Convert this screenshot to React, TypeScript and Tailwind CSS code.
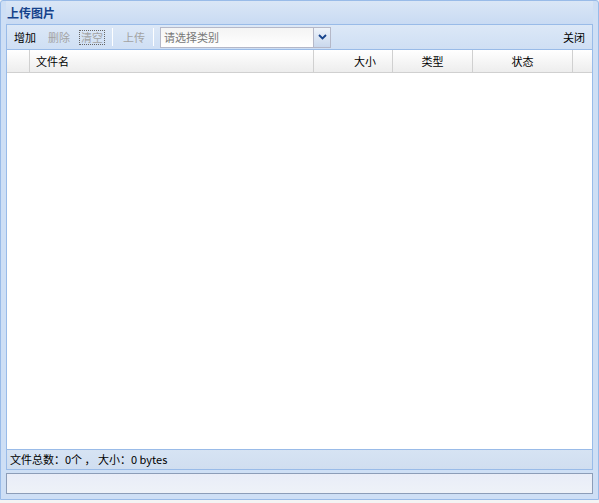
const font = { fontFamily: '"Noto Sans CJK SC", "DejaVu Sans", sans-serif' };

function Sep() {
  return <span className="h-[18px] w-px border-r border-[#fdfeff] bg-[#aac4e4]" />;
}

export default function App() {
  return (
    <div className="h-[503px] w-[599px] bg-[#f4f4f4] text-[11px] leading-none text-black" style={font}>
      <div className="flex h-[500px] flex-col rounded-t-[3px] border border-[#99bbe8] bg-[#cedff5] px-[5px] pb-[5px]">
        <div className="flex h-[23px] items-center bg-gradient-to-b from-[#dae6f6] to-[#c9dbf3] pl-[1px] text-[12px] font-bold text-[#15428b]">
          上传图片
        </div>
        <div className="flex flex-1 flex-col border border-[#99bbe8] bg-white">
          {/* toolbar */}
          <div className="flex h-[25px] items-center border-b border-[#99bbe8] bg-gradient-to-b from-[#dce8f7] to-[#cfdff4] pl-[7px] pr-[7px]">
            <span>增加</span>
            <span className="ml-[12px] text-[#a3a3a3]">删除</span>
            <span className="ml-[9px] border border-dotted border-[#666] px-[1px] py-[1px] text-[#a3a3a3]">清空</span>
            <span className="ml-[7px] flex"><Sep /></span>
            <span className="ml-[10px] text-[#a3a3a3]">上传</span>
            <span className="ml-[8px] flex"><Sep /></span>
            <div className="ml-[6px] flex h-[21px] w-[171px] border border-[#b5b8c8] bg-gradient-to-b from-[#f4f4f4] to-white">
              <span className="flex flex-1 items-center pl-[3px] text-[#777]">请选择类别</span>
              <span className="flex w-[17px] items-center justify-center border-l border-[#b5b8c8] bg-gradient-to-b from-[#eef3fa] to-[#c9d8ed]">
                <svg width="9" height="6" viewBox="0 0 9 6">
                  <path d="M1 1 L4.5 4.5 L8 1" stroke="#15428b" strokeWidth="1.8" fill="none" />
                </svg>
              </span>
            </div>
            <span className="ml-auto">关闭</span>
          </div>
          {/* grid header */}
          <div className="flex h-[23px] border-b border-[#d0d0d0] bg-gradient-to-b from-white to-[#ededed]">
            <div className="w-[23px] border-r border-[#d0d0d0]" />
            <div className="flex w-[284px] items-center border-r border-[#d0d0d0] pl-[6px]">文件名</div>
            <div className="flex w-[79px] items-center justify-end border-r border-[#d0d0d0] pr-[16px]">大小</div>
            <div className="flex w-[80px] items-center justify-center border-r border-[#d0d0d0]">类型</div>
            <div className="flex w-[100px] items-center justify-center border-r border-[#d0d0d0]">状态</div>
            <div className="flex-1" />
          </div>
          <div className="flex-1 bg-white" />
          {/* status */}
          <div className="flex h-[20px] items-center border-t border-[#99bbe8] bg-gradient-to-b from-[#d6e3f3] to-[#d0def0] pl-[3px]">
            文件总数：0个 ， 大小：0 bytes
          </div>
        </div>
        <div className="mt-[3px] h-[21px] border border-[#8c9db8] bg-gradient-to-b from-[#e9edf8] to-[#eef2f8]" />
      </div>
    </div>
  );
}
